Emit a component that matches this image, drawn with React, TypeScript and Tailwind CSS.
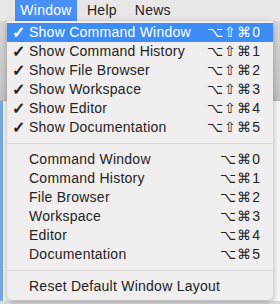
import React from "react";

const shown = [
  ["Show Command Window", "⌥⇧⌘0"],
  ["Show Command History", "⌥⇧⌘1"],
  ["Show File Browser", "⌥⇧⌘2"],
  ["Show Workspace", "⌥⇧⌘3"],
  ["Show Editor", "⌥⇧⌘4"],
  ["Show Documentation", "⌥⇧⌘5"],
];

const panes = [
  ["Command Window", "⌥⌘0"],
  ["Command History", "⌥⌘1"],
  ["File Browser", "⌥⌘2"],
  ["Workspace", "⌥⌘3"],
  ["Editor", "⌥⌘4"],
  ["Documentation", "⌥⌘5"],
];

function Row({ label, keys, checked, active }: { label: string; keys?: string; checked?: boolean; active?: boolean }) {
  return (
    <div
      className={
        "flex items-center h-[19px] pl-[5px] pr-[12px] " +
        (active ? "bg-[#3e8cf6] text-white" : "text-[#232323]")
      }
    >
      <span className="w-[17px] text-[16px] leading-none font-bold">{checked ? "✓" : ""}</span>
      <span className="flex-1 tracking-[0.25px]">{label}</span>
      {keys && <span className="tracking-[1px]">{keys}</span>}
    </div>
  );
}

function Separator() {
  return (
    <div className="h-[13px] flex items-center">
      <div className="w-full h-px bg-[#d9d6d6]" />
    </div>
  );
}

export default function App() {
  return (
    <div className="relative w-[280px] h-[304px] overflow-hidden bg-[#dcdcdc] font-['Liberation_Sans',Arial,sans-serif] text-[14px]">
      <div className="flex h-[21px] bg-[#e8e6e6] text-[#222] items-center">
        <div className="ml-[15px] h-full px-[4px] flex items-center bg-[#4a8ff6] text-white w-[62px] justify-center tracking-[0.25px]">Window</div>
        <div className="ml-[6px] px-[4px] tracking-[0.25px]">Help</div>
        <div className="ml-[10px] px-[4px] tracking-[0.25px]">News</div>
      </div>
      <div className="flex flex-col">
        <div className="h-[80px] bg-gradient-to-b from-[#d6d6d6] to-[#c4c4c4] border-b border-[#b0b0b0]" />
        <div className="h-[200px] bg-[#f4f6f9] border-l-[3px] border-[#7aa9dc]" />
      </div>

      <div className="absolute left-[7px] top-[21px] w-[266px] pt-[2px] pb-[4px] bg-[#f0eeee] rounded-b-[5px] shadow-[0_2px_6px_rgba(0,0,0,0.3)]">
        {shown.map(([l, k], i) => (
          <Row key={l} label={l} keys={k} checked active={i === 0} />
        ))}
        <Separator />
        {panes.map(([l, k]) => (
          <Row key={l} label={l} keys={k} />
        ))}
        <Separator />
        <Row label="Reset Default Window Layout" />
      </div>
    </div>
  );
}
